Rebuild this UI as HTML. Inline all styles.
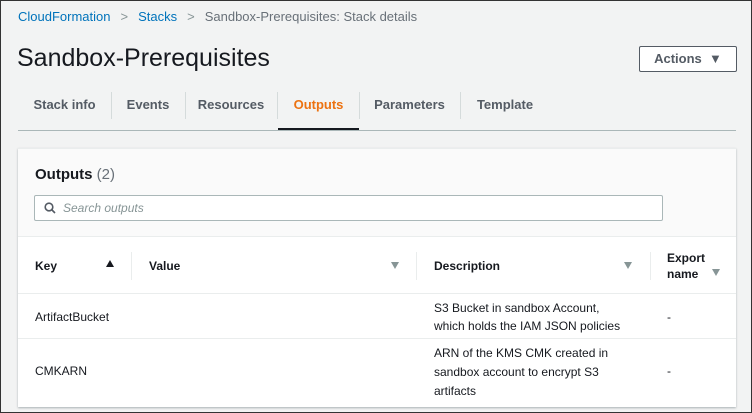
<!DOCTYPE html>
<html><head><style>
*{box-sizing:border-box;margin:0;padding:0}
body{width:752px;height:413px;background:#f2f3f3;font-family:"Liberation Sans",sans-serif;color:#16191f;position:relative;overflow:hidden;border:1px solid #333}
.abs{position:absolute}
.bc{top:8px;left:17px;font-size:13px;color:#687078;white-space:nowrap}
.bc a{color:#0073bb;text-decoration:none}
.bc .s{margin:0 10px;color:#879596}
h1{position:absolute;top:43px;left:16px;font-size:25px;font-weight:normal;color:#16191f}
.btn{top:45px;left:638px;width:98px;height:26px;border:1px solid #545b64;background:#fff;border-radius:2px;font-size:13px;font-weight:bold;color:#545b64;text-align:center;line-height:24px}
.tabs{top:90px;left:17px;width:718px;height:40px;border-bottom:1px solid #aab7b8;font-size:13px;font-weight:bold;color:#545b64}
.tab{position:absolute;top:0;height:39px;line-height:28px;text-align:center}
.sep{position:absolute;top:1px;width:1px;height:27px;background:#d5dbdb}
.panel{top:147px;left:17px;width:718px;height:259px;background:#fff;box-shadow:0 1px 2px rgba(0,28,36,.3);border-top:1px solid #eaeded}
.ph{position:absolute;top:0;left:0;width:718px;height:88px;background:#fafafa;border-bottom:1px solid #eaeded}
.search{position:absolute;top:46px;left:16px;width:629px;height:26px;border:1px solid #aab7b8;border-radius:2px;background:#fff;font-size:12px;font-style:italic;color:#879596;line-height:24px;padding-left:28px}
.th{position:absolute;font-size:12px;font-weight:bold;color:#16191f}
.td{position:absolute;font-size:12px;color:#16191f;line-height:18px}
.tri{position:absolute;width:0;height:0;border-left:4px solid transparent;border-right:4px solid transparent;border-top:7px solid #879596}
.vs{position:absolute;width:1px;height:28px;background:#eaeded;top:103px}
.hr{position:absolute;left:0;width:718px;height:1px;background:#eaeded}
</style></head><body>
<div class="abs bc"><a>CloudFormation</a><span class="s">&gt;</span><a>Stacks</a><span class="s">&gt;</span>Sandbox-Prerequisites: Stack details</div>
<h1>Sandbox-Prerequisites</h1>
<div class="abs btn">Actions &nbsp;▼</div>
<div class="abs tabs">
<div class="tab" style="left:0;width:93px">Stack info</div><div class="sep" style="left:93px"></div>
<div class="tab" style="left:93px;width:74px">Events</div><div class="sep" style="left:167px"></div>
<div class="tab" style="left:167px;width:92px">Resources</div><div class="sep" style="left:259px"></div>
<div class="tab" style="left:260px;width:81px;color:#ec7211;border-bottom:2px solid #16191f">Outputs</div><div class="sep" style="left:341px"></div>
<div class="tab" style="left:341px;width:101px">Parameters</div><div class="sep" style="left:442px"></div>
<div class="tab" style="left:442px;width:90px">Template</div>
</div>
<div class="abs panel">
<div class="ph">
<div class="abs" style="top:17px;left:17px;font-size:15px;font-weight:bold">Outputs <span style="color:#687078;font-weight:normal">(2)</span></div>
<div class="search"><svg style="position:absolute;left:9px;top:6px" width="12" height="12" viewBox="0 0 12 12"><circle cx="5" cy="5" r="3.8" fill="none" stroke="#545b64" stroke-width="1.6"/><path d="M8 8l3 3" stroke="#545b64" stroke-width="1.6"/></svg>Search outputs</div>
</div>
<div class="th" style="left:17px;top:110px">Key</div>
<div class="abs" style="left:88px;top:111px;width:0;height:0;border-left:4px solid transparent;border-right:4px solid transparent;border-bottom:7px solid #16191f"></div>
<div class="vs" style="left:113px"></div>
<div class="th" style="left:131px;top:110px">Value</div>
<div class="tri" style="left:373px;top:113px"></div>
<div class="vs" style="left:398px"></div>
<div class="th" style="left:416px;top:110px">Description</div>
<div class="tri" style="left:606px;top:113px"></div>
<div class="vs" style="left:632px"></div>
<div class="th" style="left:649px;top:101px;line-height:16px">Export<br>name</div>
<div class="tri" style="left:694px;top:120px"></div>
<div class="hr" style="top:144px"></div>
<div class="td" style="left:17px;top:159px">ArtifactBucket</div>
<div class="td" style="left:416px;top:150px">S3 Bucket in sandbox Account,<br>which holds the IAM JSON policies</div>
<div class="td" style="left:649px;top:159px">-</div>
<div class="hr" style="top:189px"></div>
<div class="td" style="left:17px;top:213px">CMKARN</div>
<div class="td" style="left:416px;top:195px;line-height:19px">ARN of the KMS CMK created in<br>sandbox account to encrypt S3<br>artifacts</div>
<div class="td" style="left:649px;top:213px">-</div>
</div>
</body></html>
